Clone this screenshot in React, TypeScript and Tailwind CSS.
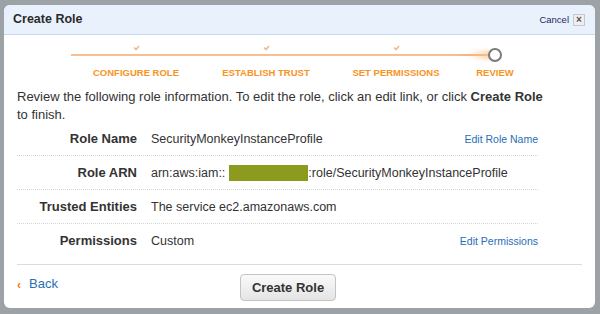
const steps = ["CONFIGURE ROLE", "ESTABLISH TRUST", "SET PERMISSIONS", "REVIEW"];

const rows = [
  { label: "Role Name", value: "SecurityMonkeyInstanceProfile", link: "Edit Role Name" },
  { label: "Role ARN", value: "arn", link: "" },
  { label: "Trusted Entities", value: "The service ec2.amazonaws.com", link: "" },
  { label: "Permissions", value: "Custom", link: "Edit Permissions" },
];

function Check() {
  return (
    <svg width="7" height="6" viewBox="0 0 7 6" className="block">
      <path d="M1 2.5 L3 4.5 L6 1" fill="none" stroke="#f1b98a" strokeWidth="1.6" />
    </svg>
  );
}

export default function App() {
  return (
    <div
      className="w-[600px] h-[314px] bg-[#9da2a7] pt-[5px] pl-[4px] overflow-hidden"
      style={{ fontFamily: '"Liberation Sans", Arial, sans-serif' }}
    >
      <div className="w-[591px] h-[303px] bg-white rounded-[6px] flex flex-col">
        {/* Header */}
        <div className="h-[30px] shrink-0 flex items-center justify-between pl-[9px] pr-[10px] bg-[#e9f1fc] border-b border-[#c6d9f0] rounded-t-[6px]">
          <span className="text-[12.5px] font-bold text-[#2b2b2b]">Create Role</span>
          <div className="flex items-center gap-[4px] pt-[1px]">
            <span className="text-[9.5px] text-[#1c2a5c]">Cancel</span>
            <span className="w-[12px] h-[12px] border border-[#c8c8c8] bg-[#eeeeee] flex items-center justify-center text-[10px] leading-none text-[#555] font-bold">
              ×
            </span>
          </div>
        </div>

        {/* Steps */}
        <div className="relative h-[53px] shrink-0 pl-[67px]">
          <div className="absolute left-[67px] top-[19px] w-[422px] h-[1.5px] bg-gradient-to-r from-[#f8c08f] via-[#f8c08f] via-[90%] to-[#f5a561]" />
          <div className="absolute left-[464px] top-[16px] w-[26px] h-[8px] rounded-full bg-gradient-to-r from-transparent to-[#f9c996] blur-[2px]" />
          <div className="flex">
            {steps.map((s, i) => (
              <div key={s} className={`${i < 3 ? "w-[130px]" : "w-[68px]"} flex flex-col items-center`}>
                <div className="h-[33px] relative w-full">
                  {i < 3 ? (
                    <div className="absolute left-[62px] top-[10px]">
                      <Check />
                    </div>
                  ) : (
                    <div className="absolute left-[27px] top-[13px] w-[14px] h-[14px] rounded-full border-2 border-[#7a7a7a] bg-white" />
                  )}
                </div>
                <span className="text-[9.5px] font-bold text-[#f7941e] leading-none whitespace-nowrap">{s}</span>
              </div>
            ))}
          </div>
        </div>

        {/* Body */}
        <div className="px-[13px] text-[13px] text-[#333] leading-[18px]">
          <p className="w-[530px]">
            Review the following role information. To edit the role, click an edit link, or click{" "}
            <b>Create Role</b> to finish.
          </p>

          <div className="w-[521px] -mt-[2px]">
            {rows.map((r, i) => (
              <div
                key={r.label}
                className={`flex items-center h-[34px] ${i < 3 ? "border-b border-dotted border-[#d6d6d6]" : ""}`}
              >
                <span className="w-[120px] text-right font-bold text-[#333]">{r.label}</span>
                <span className="ml-[14px] flex-1 flex items-center text-[12.5px]">
                  {r.value === "arn" ? (
                    <>
                      arn:aws:iam::
                      <span className="inline-block w-[79px] h-[16px] bg-[#8c9b1e] ml-[4px]" />
                      :role/SecurityMonkeyInstanceProfile
                    </>
                  ) : (
                    r.value
                  )}
                </span>
                {r.link && <span className="text-[10.5px] text-[#2a6db5]">{r.link}</span>}
              </div>
            ))}
          </div>

          <div className="w-[565px] border-t border-[#dcdcdc] mt-[6px]" />
        </div>

        {/* Footer */}
        <div className="flex items-start px-[13px] mt-[9px] relative h-[27px]">
          <span className="text-[#f07a1e] text-[12px] mr-[8px] font-bold leading-[20px] pt-[1px]">‹</span>
          <span className="text-[13px] text-[#2a6db5] leading-[20px]">Back</span>
          <button className="absolute left-[236px] top-0 w-[96px] h-[27px] rounded-[4px] border border-[#c4c4c4] bg-gradient-to-b from-[#fafafa] to-[#e4e4e4] text-[13px] font-bold text-[#333]">
            Create Role
          </button>
        </div>
      </div>
    </div>
  );
}
